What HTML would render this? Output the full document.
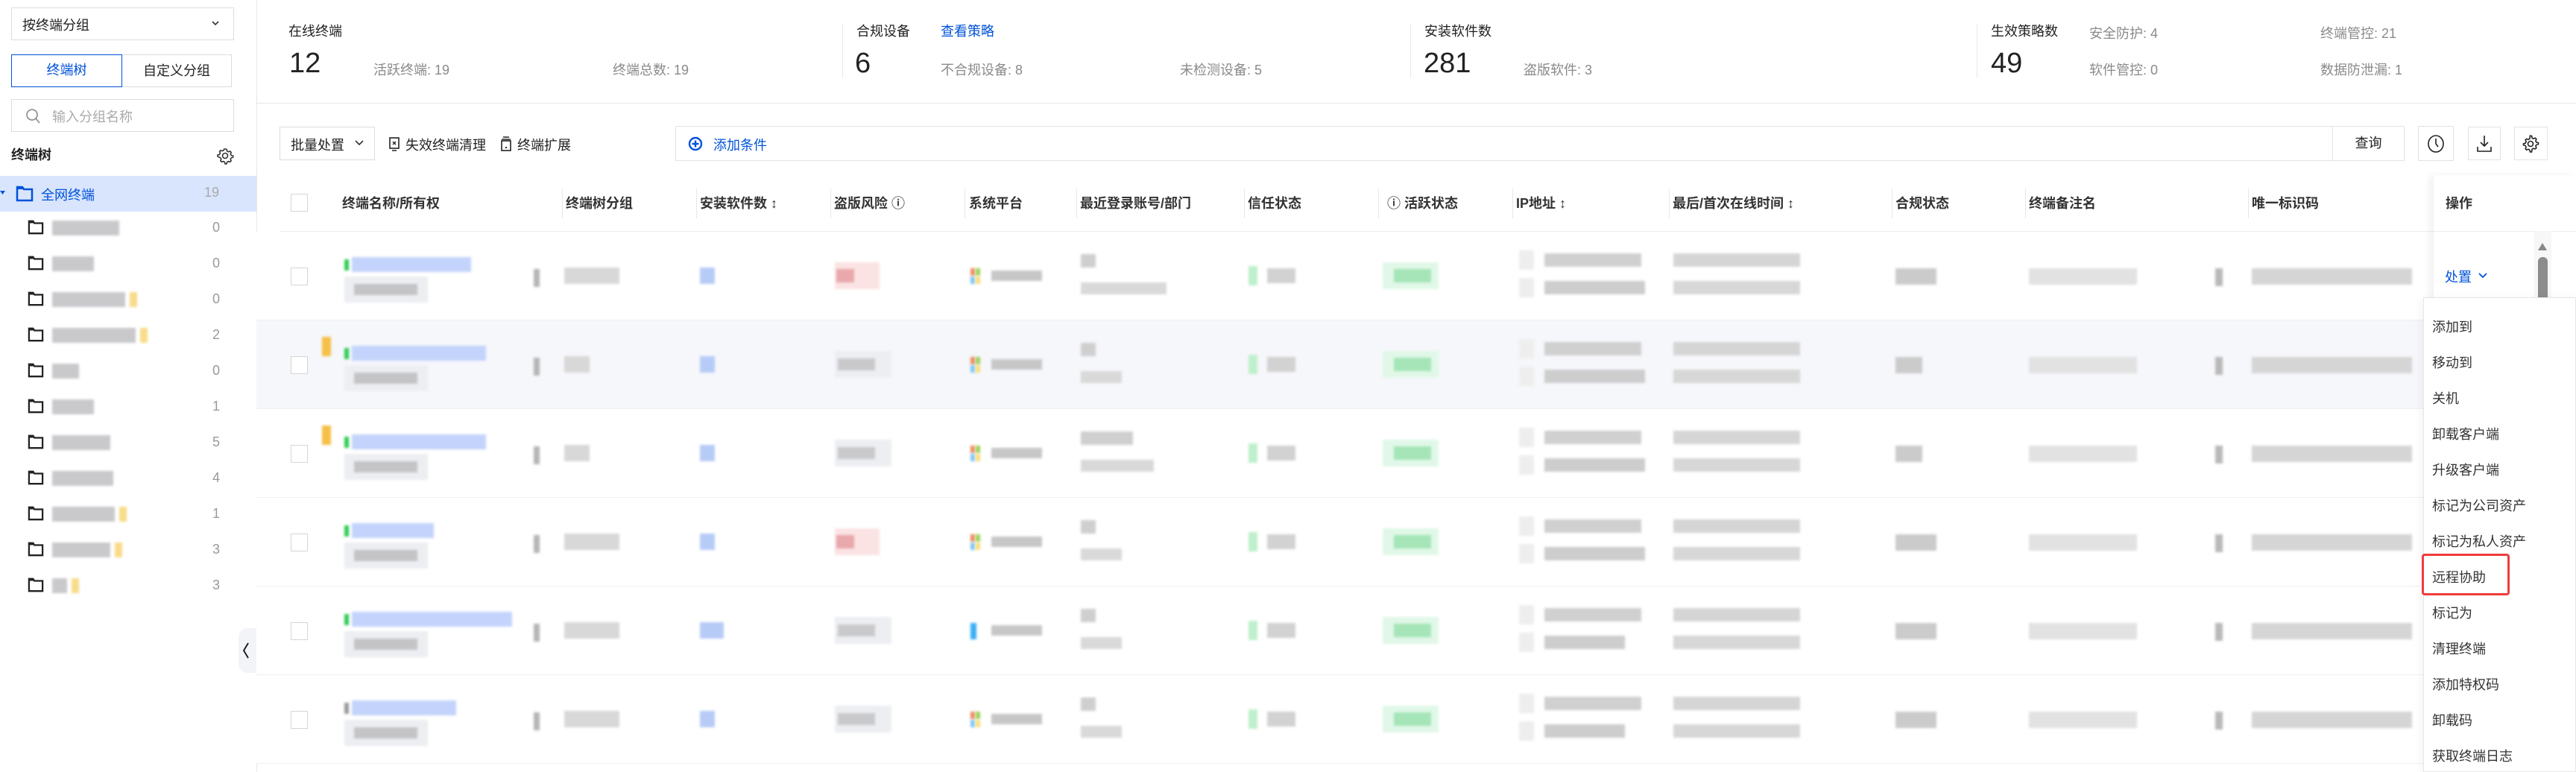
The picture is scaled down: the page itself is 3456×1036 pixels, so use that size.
<!DOCTYPE html>
<html><head><meta charset="utf-8">
<style>
*{box-sizing:border-box;margin:0;padding:0}
body{width:3456px;height:1036px;position:relative;overflow:hidden;background:#fff;font-family:"Liberation Sans","Noto Sans CJK SC",sans-serif;font-size:18px;color:#222}
.a{position:absolute;white-space:nowrap}
.b{position:absolute;filter:blur(1.5px)}
.bd{border:1px solid #dcdcdc}
.blue{color:#0052d9}
.g{color:#8a8a8a}
.h{position:absolute;top:258px;height:30px;line-height:30px;font-weight:bold;color:#333;white-space:nowrap}
.sep{position:absolute;top:253px;width:1px;height:40px;background:#e7e7e7}
.row{position:absolute;left:344px;width:3112px;height:119px;border-bottom:1px solid #f0f0f0}
.fold{position:absolute;left:36px;width:24px;height:20px}
.cnt{position:absolute;left:283px;color:#999;width:14px;text-align:center}
.mi{position:absolute;left:3263px;color:#333}
</style></head><body>

<!-- sidebar -->
<div class="a" style="left:344px;top:0;width:1px;height:1036px;background:#e7e7e7"></div>
<div class="a bd" style="left:15px;top:10px;width:299px;height:44px"></div>
<div class="a" style="left:30px;top:20px;">按终端分组</div>
<svg class="a" style="left:283px;top:26px" width="12" height="10" viewBox="0 0 12 10"><path d="M2 3l4 4 4-4" stroke="#333" stroke-width="1.6" fill="none"/></svg>
<div class="a" style="left:15px;top:73px;width:149px;height:44px;border:1.5px solid #0052d9;text-align:center;line-height:41px;color:#0052d9">终端树</div>
<div class="a" style="left:164px;top:73px;width:147px;height:44px;border:1px solid #dcdcdc;border-left:none;text-align:center;line-height:42px">自定义分组</div>
<div class="a bd" style="left:15px;top:133px;width:299px;height:44px"></div>
<svg class="a" style="left:33px;top:144px" width="22" height="24" viewBox="0 0 22 24"><circle cx="10" cy="10" r="7" stroke="#888" stroke-width="1.6" fill="none"/><path d="M15 15l5 6" stroke="#888" stroke-width="1.6"/></svg>
<div class="a" style="left:70px;top:143px;color:#aaa">输入分组名称</div>
<div class="a" style="left:15px;top:194px;font-weight:bold">终端树</div>
<svg class="a" style="left:290px;top:197px" width="24" height="24" viewBox="0 0 24 24"><path d="M12 3l2 .3.6 2.4 1.8 1 2.3-.8 1.4 1.5-.8 2.3 1 1.8 2.4.6v2l-2.4.6-1 1.8.8 2.3-1.4 1.5-2.3-.8-1.8 1-.6 2.4h-2l-.6-2.4-1.8-1-2.3.8-1.4-1.5.8-2.3-1-1.8L2 13v-2l2.4-.6 1-1.8-.8-2.3L6 4.8l2.3.8 1.8-1L10.7 3z" stroke="#333" stroke-width="1.6" fill="none"/><circle cx="12" cy="12" r="3.5" stroke="#333" stroke-width="1.6" fill="none"/></svg>
<div class="a" style="left:0;top:236px;width:344px;height:48px;background:#d9e5fd"></div>
<svg class="a" style="left:0;top:255px" width="8" height="8"><path d="M0 1h7l-3.5 5z" fill="#0052d9"/></svg>
<svg class="a" style="left:21px;top:249px" width="24" height="22" viewBox="0 0 24 22"><path d="M2 2h7l2 3h11v15H2z" fill="none" stroke="#0052d9" stroke-width="2.5"/><path d="M2 2h7l2 3H2z" fill="#0052d9"/></svg>
<div class="a blue" style="left:55px;top:248px">全网终端</div>
<div class="a" style="left:274px;top:248px;color:#aaa">19</div>

<!-- folder rows -->
<div id="folders"></div>
<svg width="0" height="0" style="position:absolute"><defs><symbol id="fd" viewBox="0 0 24 22"><path d="M2 2h6l2 3h12v15H2z" fill="none" stroke="#222" stroke-width="2.5"/><path d="M2 1h6l2 4H2z" fill="#222"/></symbol></defs></svg>

<div class="a" style="left:320px;top:843px;width:24px;height:60px;background:#f3f4f7;border-radius:12px 0 0 12px"></div>
<svg class="a" style="left:324px;top:861px" width="12" height="24"><path d="M9 2L3 12l6 10" stroke="#111" stroke-width="1.8" fill="none"/></svg>

<!-- stats -->
<div class="a" style="left:344px;top:138px;width:3112px;height:1px;background:#e7e7e7"></div>
<div class="a" style="left:387px;top:28px">在线终端</div>
<div class="a" style="left:388px;top:64px;font-size:38px">12</div>
<div class="a g" style="left:501px;top:80px">活跃终端: 19</div>
<div class="a g" style="left:822px;top:80px">终端总数: 19</div>
<div class="a" style="left:1130px;top:33px;width:1px;height:71px;background:#e7e7e7"></div>
<div class="a" style="left:1149px;top:28px">合规设备</div>
<div class="a blue" style="left:1262px;top:28px">查看策略</div>
<div class="a" style="left:1147px;top:64px;font-size:38px">6</div>
<div class="a g" style="left:1262px;top:80px">不合规设备: 8</div>
<div class="a g" style="left:1583px;top:80px">未检测设备: 5</div>
<div class="a" style="left:1892px;top:33px;width:1px;height:71px;background:#e7e7e7"></div>
<div class="a" style="left:1911px;top:28px">安装软件数</div>
<div class="a" style="left:1910px;top:64px;font-size:38px">281</div>
<div class="a g" style="left:2044px;top:80px">盗版软件: 3</div>
<div class="a" style="left:2652px;top:33px;width:1px;height:71px;background:#e7e7e7"></div>
<div class="a" style="left:2671px;top:28px">生效策略数</div>
<div class="a" style="left:2671px;top:64px;font-size:38px">49</div>
<div class="a g" style="left:2803px;top:31px">安全防护: 4</div>
<div class="a g" style="left:2803px;top:80px">软件管控: 0</div>
<div class="a g" style="left:3113px;top:31px">终端管控: 21</div>
<div class="a g" style="left:3113px;top:80px">数据防泄漏: 1</div>

<!-- toolbar -->
<div class="a bd" style="left:375px;top:170px;width:128px;height:45px"></div>
<div class="a" style="left:390px;top:181px">批量处置</div>
<svg class="a" style="left:476px;top:187px" width="12" height="10"><path d="M1 2l5 5 5-5" stroke="#333" stroke-width="1.6" fill="none"/></svg>
<svg class="a" style="left:522px;top:184px" width="14" height="20"><rect x="1" y="1" width="12" height="14" stroke="#222" stroke-width="1.6" fill="none"/><path d="M4 18h6M5 6l4 4M9 6l-4 4" stroke="#222" stroke-width="1.4"/></svg>
<div class="a" style="left:544px;top:181px">失效终端清理</div>
<svg class="a" style="left:672px;top:183px" width="14" height="20"><path d="M3 1h8M1 4h12" stroke="#222" stroke-width="1.6"/><rect x="1" y="6" width="12" height="13" stroke="#222" stroke-width="1.6" fill="none"/><rect x="6" y="14" width="2" height="2" fill="#222"/></svg>
<div class="a" style="left:694px;top:181px">终端扩展</div>
<div class="a bd" style="left:906px;top:169px;width:2224px;height:47px;border-color:#e3e3e3"></div>
<svg class="a" style="left:923px;top:183px" width="20" height="20"><circle cx="10" cy="10" r="8" stroke="#0052d9" stroke-width="2.4" fill="none"/><path d="M10 5.5v9M5.5 10h9" stroke="#0052d9" stroke-width="2.4"/></svg>
<div class="a blue" style="left:957px;top:181px">添加条件</div>
<div class="a bd" style="left:3129px;top:169px;width:97px;height:47px;border-color:#e3e3e3;text-align:center;line-height:45px">查询</div>
<div class="a bd" style="left:3244px;top:169px;width:48px;height:47px;border-color:#e3e3e3"></div>
<svg class="a" style="left:3256px;top:180px" width="24" height="26"><ellipse cx="12" cy="13" rx="10" ry="11" stroke="#222" stroke-width="1.6" fill="none"/><path d="M12 6v7l3 4" stroke="#222" stroke-width="1.6" fill="none"/></svg>
<div class="a bd" style="left:3311px;top:170px;width:44px;height:45px;border-color:#e3e3e3"></div>
<svg class="a" style="left:3322px;top:181px" width="22" height="24"><path d="M11 1v14M6 10l5 5 5-5M2 16v6h18v-6" stroke="#222" stroke-width="1.6" fill="none"/></svg>
<div class="a bd" style="left:3373px;top:170px;width:45px;height:45px;border-color:#e3e3e3"></div>
<svg class="a" style="left:3383px;top:181px" width="24" height="24" viewBox="0 0 24 24"><path d="M12 2l2 .3.6 2.6 1.8 1 2.5-.9 1.4 1.5-.9 2.5 1 1.8 2.6.6v2l-2.6.6-1 1.8.9 2.5-1.4 1.5-2.5-.9-1.8 1L14 23.7h-2l-.6-2.6-1.8-1-2.5.9-1.4-1.5.9-2.5-1-1.8L3 14.6v-2l2.6-.6 1-1.8-.9-2.5L7 6.2l2.5.9 1.8-1L12 2z" stroke="#222" stroke-width="1.6" fill="none" transform="translate(-.5 -.8)"/><circle cx="12" cy="12" r="3.5" stroke="#222" stroke-width="1.6" fill="none"/></svg>

<!-- table header -->
<div class="a" style="left:375px;top:310px;width:3081px;height:1px;background:#ececec"></div>
<div class="a" style="left:390px;top:260px;width:23px;height:24px;border:1px solid #d5d5d5"></div>
<div class="h" style="left:459px">终端名称/所有权</div>
<div class="sep" style="left:754px"></div><div class="h" style="left:759px">终端树分组</div>
<div class="sep" style="left:934px"></div><div class="h" style="left:939px">安装软件数 <span style="font-weight:normal">↕</span></div>
<div class="sep" style="left:1114px"></div><div class="h" style="left:1119px">盗版风险 ⓘ</div>
<div class="sep" style="left:1294px"></div><div class="h" style="left:1300px">系统平台</div>
<div class="sep" style="left:1444px"></div><div class="h" style="left:1449px">最近登录账号/部门</div>
<div class="sep" style="left:1669px"></div><div class="h" style="left:1674px">信任状态</div>
<div class="sep" style="left:1849px"></div><div class="h" style="left:1861px">ⓘ 活跃状态</div>
<div class="sep" style="left:2029px"></div><div class="h" style="left:2034px">IP地址 <span style="font-weight:normal">↕</span></div>
<div class="sep" style="left:2239px"></div><div class="h" style="left:2244px">最后/首次在线时间 <span style="font-weight:normal">↕</span></div>
<div class="sep" style="left:2538px"></div><div class="h" style="left:2543px">合规状态</div>
<div class="sep" style="left:2717px"></div><div class="h" style="left:2722px">终端备注名</div>
<div class="sep" style="left:3016px"></div><div class="h" style="left:3021px">唯一标识码</div>

<div id="rows"></div>

<!-- operation column -->
<div class="a" style="left:3265px;top:235px;width:191px;height:801px;background:#fff;box-shadow:-6px 0 8px rgba(0,0,0,0.05)"></div>
<div class="a" style="left:3265px;top:310px;width:191px;height:1px;background:#ececec"></div>
<div class="h" style="left:3281px">操作</div>
<div class="a blue" style="left:3280px;top:358px">处置</div>
<svg class="a" style="left:3325px;top:365px" width="12" height="10"><path d="M1 2l5 5 5-5" stroke="#0052d9" stroke-width="1.8" fill="none"/></svg>
<div class="a" style="left:3400px;top:310px;width:23px;height:90px;background:#f7f7f7"></div>
<svg class="a" style="left:3404px;top:325px" width="14" height="12"><path d="M7 1l6 10H1z" fill="#888"/></svg>
<div class="a" style="left:3405px;top:345px;width:13px;height:60px;background:#8c8c8c;border-radius:6px 6px 0 0"></div>

<!-- dropdown menu -->
<div class="a" style="left:3251px;top:399px;width:205px;height:637px;background:#fff;border:1px solid #e7e7e7;box-shadow:0 3px 12px rgba(0,0,0,0.08)"></div>
<div class="mi" style="top:425px">添加到</div>
<div class="mi" style="top:473px">移动到</div>
<div class="mi" style="top:521px">关机</div>
<div class="mi" style="top:569px">卸载客户端</div>
<div class="mi" style="top:617px">升级客户端</div>
<div class="mi" style="top:665px">标记为公司资产</div>
<div class="mi" style="top:713px">标记为私人资产</div>
<div class="mi" style="top:761px">远程协助</div>
<div class="a" style="left:3249px;top:743px;width:118px;height:56px;border:3px solid #f03c3c;border-radius:4px"></div>
<div class="mi" style="top:809px">标记为</div>
<div class="mi" style="top:857px">清理终端</div>
<div class="mi" style="top:905px">添加特权码</div>
<div class="mi" style="top:953px">卸载码</div>
<div class="mi" style="top:1001px">获取终端日志</div>

<script>
var f='';var c=[0,0,0,2,0,1,5,4,1,3,3],w=[90,56,98,112,36,56,78,82,84,78,20],y=[0,0,1,1,0,0,0,0,1,1,1];
for(var i=0;i<11;i++){var cy=306+48*i;
f+='<svg class="fold" style="top:'+(cy-11)+'px" viewBox="0 0 24 22"><use href="#fd"/></svg>';
f+='<div class="b" style="left:70px;top:'+(cy-10)+'px;width:'+w[i]+'px;height:20px;background:#c9c9cc"></div>';
if(y[i])f+='<div class="b" style="left:'+(76+w[i])+'px;top:'+(cy-10)+'px;width:10px;height:20px;background:#f8dc8a"></div>';
f+='<div class="cnt" style="top:'+(cy-11)+'px">'+c[i]+'</div>';}
document.getElementById('folders').innerHTML=f;
var r='';var red=[1,0,0,1,0,0],yl=[0,1,1,0,0,0],hv=[0,1,0,0,0,0],nw=[160,180,180,110,215,140],bl=[1,1,1,1,1,0],ww=[1,1,1,1,0,1];
function B(l,t,wd,h,bg){return '<div class="b" style="left:'+(l-344)+'px;top:'+t+'px;width:'+wd+'px;height:'+h+'px;background:'+bg+'"></div>';}
for(var k=0;k<6;k++){var T=311+119*k;
r+='<div class="row" style="top:'+T+'px;background:'+(hv[k]?'#f6f7fb':'#fff')+'">';
r+='<div style="position:absolute;left:46px;top:48px;width:23px;height:24px;border:1px solid #d5d5d5;background:#fff"></div>';
if(yl[k])r+=B(432,22,12,26,'#f6bf48');
r+=B(462,37,6,15,bl[k]?'#2fcc55':'#999');
r+=B(472,34,nw[k],20,'#c3d3fb');
r+=B(462,60,112,35,'#eceef2')+B(475,70,85,15,'#c4c4c6');
r+=B(716,50,8,24,'#b5b5b5');
r+=B(757,48,k==1||k==2?34:74,22,'#d8d8d8');
r+=B(939,48,k==4?32:20,22,'#b7cbf7');
r+=red[k]?(B(1120,41,60,36,'#fbe3e4')+B(1122,50,24,18,'#e9a8ab')):(B(1120,41,76,36,'#eceef2')+B(1124,51,50,16,'#c9c9cc'));
r+=ww[k]?(B(1302,49,6,10,'#f08a5d')+B(1309,49,6,10,'#9bd15a')+B(1302,60,6,10,'#7fc7f5')+B(1309,60,6,10,'#f9dd78')):B(1302,49,8,22,'#3ab0f5');
r+=B(1330,52,68,14,'#c7c7c7');
r+=B(1450,30,k==2?70:20,18,'#cfcfcf')+B(1450,68,k==2?98:(k==0?115:55),16,'#d9d9d9');
r+=B(1675,46,12,26,'#bff0cc')+B(1700,49,38,20,'#d2d2d2');
r+=B(1855,41,75,36,'#e1f8e8')+B(1870,50,50,18,'#a5e5b7');
r+=B(2038,25,20,26,'#eeeeee')+B(2072,29,130,18,'#d0d0d0')+B(2038,62,20,26,'#eeeeee')+B(2072,66,k>3?108:135,18,'#cdcdcd');
r+=B(2245,29,170,18,'#d5d5d5')+B(2245,66,170,18,'#d7d7d7');
r+=B(2543,49,k==1||k==2?36:55,22,'#cbcbcb');
r+=B(2722,49,145,22,'#e2e2e2');
r+=B(2972,49,10,24,'#b9b9b9');
r+=B(3021,49,215,22,'#d5d5d5');
r+='</div>';}
document.getElementById('rows').innerHTML=r;
</script>
</body></html>
